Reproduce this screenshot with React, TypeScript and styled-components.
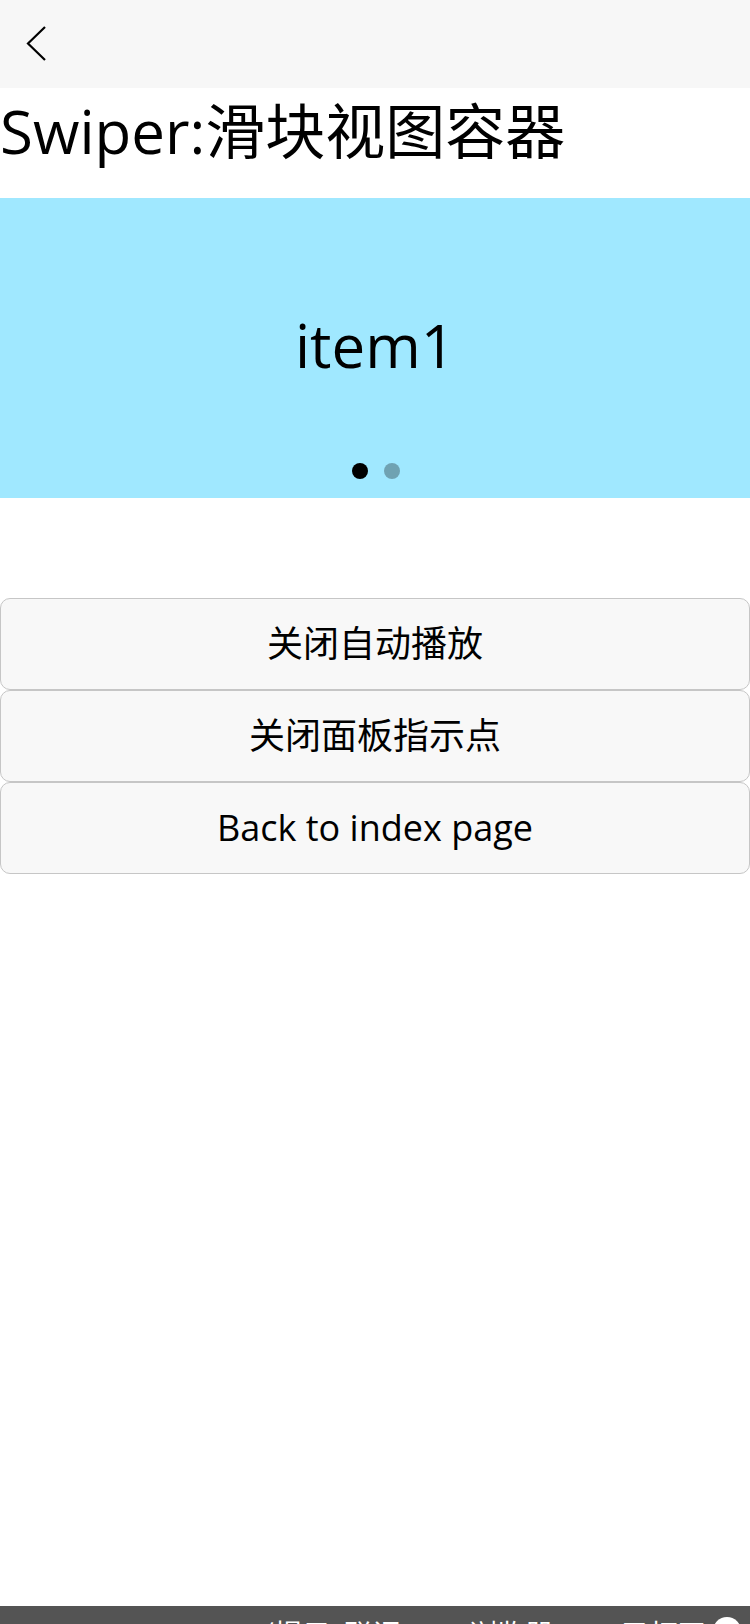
import React from "react";
import styled, { createGlobalStyle } from "styled-components";

const GlobalStyle = createGlobalStyle`
  html, body { margin: 0; padding: 0; background: #ffffff; }
  body { font-family: "Open Sans", "Noto Sans CJK SC", sans-serif; color: #000; }
  * { box-sizing: border-box; }
`;

const Page = styled.div`
  display: flex;
  flex-direction: column;
  min-height: 1624px;
`;

const NavBar = styled.div`
  height: 88px;
  background: #f7f7f7;
  display: flex;
  align-items: center;
  padding-left: 26px;
`;

const BackIcon = styled.svg`
  width: 22px;
  height: 36px;
  display: block;
`;

const Title = styled.h1`
  margin: 0 0 23px 0;
  font-size: 60px;
  font-weight: 400;
  line-height: 87px;
  white-space: nowrap;
`;

const Swiper = styled.div`
  position: relative;
  height: 300px;
  background: #a0e8ff;
  display: flex;
  align-items: center;
  justify-content: center;
`;

const SlideText = styled.div`
  font-size: 60px;
  line-height: 1;
  margin-top: -6px;
`;

const Dots = styled.div`
  position: absolute;
  left: 0;
  right: 0;
  bottom: 19px;
  display: flex;
  justify-content: center;
  gap: 16px;
  padding-left: 2px;
`;

const Dot = styled.span<{ $active?: boolean }>`
  width: 16px;
  height: 16px;
  border-radius: 50%;
  background: ${(p) => (p.$active ? "#000000" : "rgba(0,0,0,0.3)")};
`;

const Spacer = styled.div`
  height: 100px;
`;

const ButtonList = styled.div`
  display: flex;
  flex-direction: column;
`;

const Button = styled.button`
  height: 92px;
  width: 100%;
  margin: 0;
  padding: 0;
  background: #f8f8f8;
  border: 1px solid #c6c6c6;
  border-radius: 10px;
  font-family: "Open Sans", "Noto Sans CJK SC", sans-serif;
  font-size: 36px;
  color: #000;
  display: flex;
  align-items: center;
  justify-content: center;
  line-height: 1;
`;

const BottomBar = styled.div`
  margin-top: auto;
  height: 18px;
  background: #545454;
  position: relative;
  overflow: hidden;
`;

const BottomText = styled.div`
  position: absolute;
  left: 265px;
  top: 13px;
  color: #ffffff;
  font-size: 28px;
  line-height: 1;
  white-space: nowrap;
  font-family: "Noto Sans CJK SC", sans-serif;
`;

const BottomCircle = styled.span`
  position: absolute;
  left: 713px;
  top: 11px;
  width: 28px;
  height: 28px;
  border-radius: 50%;
  background: #ffffff;
`;

export default function App() {
  return (
    <>
      <GlobalStyle />
      <Page>
        <NavBar>
          <BackIcon viewBox="0 0 22 36">
            <path d="M19 1 L2 17.5 L19 34" fill="none" stroke="#000" strokeWidth="2.2" />
          </BackIcon>
        </NavBar>
        <Title>Swiper:滑块视图容器</Title>
        <Swiper>
          <SlideText>item1</SlideText>
          <Dots>
            <Dot $active />
            <Dot />
          </Dots>
        </Swiper>
        <Spacer />
        <ButtonList>
          <Button>关闭自动播放</Button>
          <Button>关闭面板指示点</Button>
          <Button>Back to index page</Button>
        </ButtonList>
        <BottomBar>
          <BottomText>(提示: 联调 ·· 浏览器 ·· 已打开 ·· 页面  ·· 日志)</BottomText>
          <BottomCircle />
        </BottomBar>
      </Page>
    </>
  );
}
